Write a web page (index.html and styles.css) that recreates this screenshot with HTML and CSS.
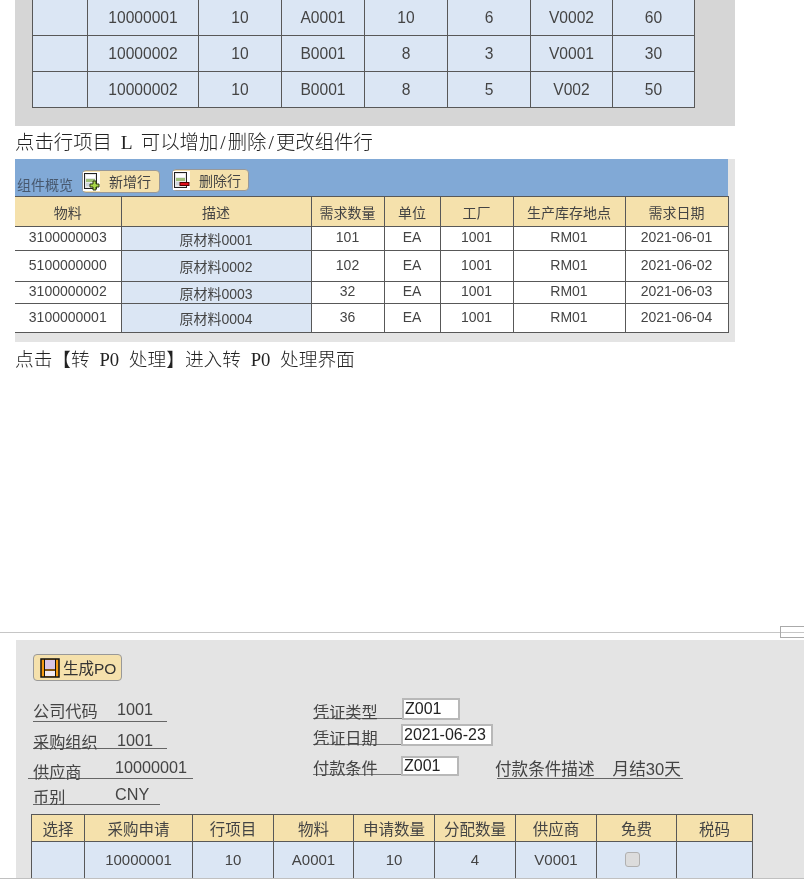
FILE: index.html
```html
<!DOCTYPE html>
<html lang="en">

<head>
    <meta charset="UTF-8">
    <title>Document</title>
    <link rel="stylesheet" href="styles.css">
</head>

<body>
    <!-- allocation table, top is scrolled off -->
    <section class="panel-top">
        <table class="grid grid-top">
            <colgroup>
                <col class="t1"><col class="t2"><col class="t3"><col class="t4">
                <col class="t5"><col class="t6"><col class="t7"><col class="t8">
            </colgroup>
            <tr><td></td><td>10000001</td><td>10</td><td>A0001</td><td>10</td><td>6</td><td>V0002</td><td>60</td></tr>
            <tr><td></td><td>10000002</td><td>10</td><td>B0001</td><td>8</td><td>3</td><td>V0001</td><td>30</td></tr>
            <tr><td></td><td>10000002</td><td>10</td><td>B0001</td><td>8</td><td>5</td><td>V002</td><td>50</td></tr>
        </table>
    </section>

    <p class="note note-first">点击行项目 L 可以增加<span class="slash">/</span>删除<span class="slash">/</span>更改组件行</p>

    <section class="panel-comp">
        <div class="comp-bar">
            <span class="comp-title">组件概览</span>
            <button class="btn btn-add">
                <svg class="btn-icon" width="17" height="19" viewBox="0 0 17 19">
                    <rect x="1.5" y="1.5" width="12" height="15" fill="#e8e8e8" stroke="#222"/>
                    <rect x="3" y="3" width="9" height="3" fill="#fff"/>
                    <rect x="3" y="7" width="9" height="3" fill="#9fc07a"/>
                    <rect x="3" y="11" width="9" height="3" fill="#cfd6dc"/>
                    <path d="M10 9h3v3h3v3h-3v3h-3v-3H7v-3h3z" fill="#a8d848" stroke="#2c3a10"/>
                </svg>
                <span class="btn-text">新增行</span>
            </button>
            <button class="btn btn-del">
                <svg class="btn-icon" width="17" height="19" viewBox="0 0 17 19">
                    <rect x="1.5" y="1.5" width="12" height="15" fill="#e8e8e8" stroke="#222"/>
                    <rect x="3" y="3" width="9" height="3" fill="#fff"/>
                    <rect x="3" y="7" width="9" height="3" fill="#9fc07a"/>
                    <rect x="3" y="11" width="5" height="3" fill="#cfd6dc"/>
                    <rect x="7" y="11.5" width="9" height="3" fill="#e0101c" stroke="#500"/>
                </svg>
                <span class="btn-text">删除行</span>
            </button>
        </div>
        <table class="grid grid-comp">
            <colgroup>
                <col class="c1"><col class="c2"><col class="c3"><col class="c4">
                <col class="c5"><col class="c6"><col class="c7">
            </colgroup>
            <tr class="head row-h"><th>物料</th><th>描述</th><th>需求数量</th><th>单位</th><th>工厂</th><th>生产库存地点</th><th>需求日期</th></tr>
            <tr class="row-a"><td>3100000003</td><td class="desc">原材料0001</td><td>101</td><td>EA</td><td>1001</td><td>RM01</td><td>2021-06-01</td></tr>
            <tr class="row-b"><td>5100000000</td><td class="desc">原材料0002</td><td>102</td><td>EA</td><td>1001</td><td>RM01</td><td>2021-06-02</td></tr>
            <tr class="row-c"><td>3100000002</td><td class="desc">原材料0003</td><td>32</td><td>EA</td><td>1001</td><td>RM01</td><td>2021-06-03</td></tr>
            <tr class="row-d"><td>3100000001</td><td class="desc">原材料0004</td><td>36</td><td>EA</td><td>1001</td><td>RM01</td><td>2021-06-04</td></tr>
        </table>
    </section>

    <p class="note note-second">点击【转 P0 处理】进入转 P0 处理界面</p>

    <div class="divider"><span class="divider-handle"></span></div>

    <section class="panel-po">
        <button class="btn btn-po">
            <svg class="btn-icon" width="20" height="20" viewBox="0 0 20 20">
                <rect x="1" y="1" width="18" height="18" fill="#f59a12" stroke="#111" stroke-width="1.5"/>
                <rect x="5" y="2" width="10" height="9" fill="#d9c6e6"/>
                <rect x="5" y="13" width="10" height="5" fill="#f0eaf4"/>
                <path d="M4.5 1v18M15.5 1v18M4.5 12h11" fill="none" stroke="#111"/>
            </svg>
            <span class="btn-text">生成PO</span>
        </button>

        <div class="po-form">
            <div class="po-left">
                <div class="field f1"><span class="flabel">公司代码</span><span class="fvalue">1001</span></div>
                <div class="field f2"><span class="flabel">采购组织</span><span class="fvalue">1001</span></div>
                <div class="field f3"><span class="flabel">供应商</span><span class="fvalue">10000001</span></div>
                <div class="field f4"><span class="flabel">币别</span><span class="fvalue">CNY</span></div>
            </div>
            <div class="po-right">
                <div class="inrow r1"><span class="inlabel">凭证类型</span><input class="in in-short" value="Z001"></div>
                <div class="inrow r2"><span class="inlabel inlabel-tight">凭证日期</span><input class="in in-date" value="2021-06-23"></div>
                <div class="inrow r3">
                    <span class="inlabel inlabel-tight">付款条件</span><input class="in in-short" value="Z001">
                    <div class="term"><span class="term-label">付款条件描述</span><span class="term-value">月结30天</span></div>
                </div>
            </div>
        </div>

        <table class="grid grid-po">
            <colgroup>
                <col class="p1"><col class="p2"><col class="p3"><col class="p4"><col class="p5">
                <col class="p6"><col class="p7"><col class="p8"><col class="p9">
            </colgroup>
            <tr class="head row-ph"><th>选择</th><th>采购申请</th><th>行项目</th><th>物料</th><th>申请数量</th><th>分配数量</th><th>供应商</th><th>免费</th><th>税码</th></tr>
            <tr class="row-pd"><td></td><td>10000001</td><td>10</td><td>A0001</td><td>10</td><td>4</td><td>V0001</td><td><input type="checkbox" class="check" disabled></td><td></td></tr>
        </table>
    </section>
    <div class="page-end"></div>
</body>

</html>
```

FILE: styles.css
```css
html,
body {
    margin: 0;
    height: 880px;
    overflow: hidden;
    background: #fff;
}

body {
    font-family: "Liberation Sans", "Noto Sans CJK SC", sans-serif;
    color: #444;
}

/* the shots are slightly soft */
section,
.note {
    filter: blur(0.5px);
}

/* tables */
.grid {
    table-layout: fixed;
    border-collapse: collapse;
    background: #dbe6f4;
}

.grid td,
.grid th {
    border: 1px solid #585858;
    padding: 0;
    text-align: center;
    font-weight: normal;
    overflow: hidden;
    white-space: nowrap;
}

.grid .head th {
    background: #f5e1ac;
}

/* top panel */
.panel-top {
    margin-left: 15px;
    width: 720px;
    height: 126px;
    background: #d6d6d6;
    padding-left: 17px;
    box-sizing: border-box;
    overflow: hidden;
}

.grid-top {
    width: 662px;
    font-size: 15.6px;
    margin-top: -1px;
}

.grid-top tr {
    height: 36px;
}

.t1 { width: 55px; }
.t2 { width: 111px; }
.t3 { width: 83px; }
.t4 { width: 83px; }
.t5 { width: 83px; }
.t6 { width: 83px; }
.t7 { width: 82px; }
.t8 { width: 82px; }

/* notes */
.note {
    margin: 0 0 0 15px;
    height: 33px;
    line-height: 33px;
    font-family: "Liberation Serif", "Noto Sans CJK SC", serif;
    font-weight: 300;
    word-spacing: 4px;
    color: #222;
}

.note-first {
    font-size: 19.4px;
}

.note-second {
    font-size: 18.7px;
    line-height: 36px;
    word-spacing: 5px;
}

.slash {
    margin: 0 2px;
}

/* component panel */
.panel-comp {
    margin-left: 15px;
    width: 720px;
    height: 183px;
    background: #e4e4e4;
}

.comp-bar {
    display: flex;
    align-items: flex-start;
    width: 713px;
    height: 37px;
    background: #81a9d6;
    box-sizing: border-box;
    padding-left: 2px;
}

.comp-title {
    margin-top: 17px;
    font-size: 14px;
    line-height: 18px;
    color: #47586e;
}

.btn {
    display: flex;
    align-items: center;
    padding: 0;
    box-sizing: border-box;
    border: 1px solid #999;
    border-radius: 4px;
    background: #f5e1ac;
    font-family: inherit;
    font-size: 14px;
    color: #444;
}

.btn-add {
    width: 78px;
    height: 23px;
    margin: 11px 0 0 9px;
}

.btn-del {
    width: 77px;
    height: 22px;
    margin: 10px 0 0 12px;
}

.btn-add .btn-icon,
.btn-del .btn-icon {
    background: #fff;
    flex-shrink: 0;
}

.btn-text {
    margin-left: 9px;
}

.btn-add .btn-text {
    margin-bottom: 2px;
}

.grid-comp {
    width: 713px;
    font-size: 14px;
    background: #fff;
}

.grid-comp td {
    line-height: 16px;
    padding-bottom: 3px;
}

.grid-comp td:first-child,
.grid-comp th:first-child {
    border-left: 0;
}

.grid-comp .desc {
    background: #dbe6f4;
    padding: 2px 0 0;
}

.c1 { width: 106px; }
.c2 { width: 190px; }
.c3 { width: 73px; }
.c4 { width: 56px; }
.c5 { width: 73px; }
.c6 { width: 112px; }
.c7 { width: 103px; }

.row-h { height: 30px; }
.row-a { height: 24px; }
.row-b { height: 31px; }
.row-c { height: 22px; }
.row-d { height: 29px; }

/* divider between the two shots */
.divider {
    position: relative;
    margin-top: 257px;
    height: 1px;
    background: #c6c6c6;
}

.divider-handle {
    position: absolute;
    left: 780px;
    top: -6px;
    width: 24px;
    height: 10px;
    border: 1px solid #aaa;
}

/* PO panel */
.panel-po {
    margin: 7px 0 0 16px;
    height: 238px;
    background: #e4e4e4;
    padding-top: 14px;
    box-sizing: border-box;
    overflow: hidden;
}

.btn-po {
    width: 89px;
    height: 27px;
    margin-left: 17px;
    font-size: 15.5px;
    color: #333;
}

.btn-po .btn-icon {
    margin-left: 6px;
}

.btn-po .btn-text {
    margin: 0 0 1px 3px;
}

.po-form {
    display: flex;
    margin-top: 20px;
    font-size: 16.2px;
}

.po-left {
    width: 285px;
    margin-left: 12px;
    flex-shrink: 0;
}

.field {
    display: flex;
    align-items: flex-end;
    height: 20px;
    border-bottom: 1px solid #666;
    line-height: 14px;
}

.flabel {
    width: 84px;
    flex-shrink: 0;
}

.fvalue {
    white-space: nowrap;
}

.f1 { width: 134px; margin-left: 5px; }
.f1 .flabel { margin-bottom: 3px; }
.f1 .fvalue { margin-bottom: 5px; }

.f2 { width: 134px; margin: 6px 0 0 5px; }
.f2 .flabel { margin-bottom: -1px; }
.f2 .fvalue { margin-bottom: 1px; }

.f3 { width: 165px; margin-top: 9px; }
.f3 .flabel { margin: 0 0 -1px 5px; width: 82px; }
.f3 .fvalue { margin-bottom: 4px; }

.f4 { width: 127px; margin: 5px 0 0 5px; }
.f4 .flabel { margin-bottom: 0; width: 82px; }
.f4 .fvalue { margin-bottom: 3px; }

.po-right {
    margin-top: -3px;
}

.inrow {
    display: flex;
    align-items: flex-end;
}

.r1 { height: 22px; }
.r2 { height: 22px; margin-top: 4px; }
.r3 { height: 20px; margin-top: 10px; }

.inlabel {
    width: 89px;
    margin-bottom: 1px;
    line-height: 12px;
    border-bottom: 1px solid #777;
}

.inlabel-tight {
    width: 88px;
}

.in {
    box-sizing: border-box;
    height: 100%;
    margin: 0;
    padding: 0 0 0 1px;
    border: 2px solid #b8b8b8;
    background: #fff;
    font-family: inherit;
    font-size: 16px;
    color: #222;
}

.in-short { width: 58px; }
.in-date { width: 92px; }

.term {
    display: flex;
    width: 186px;
    margin: 0 0 -3px 38px;
    border-bottom: 1px solid #666;
    font-size: 16.6px;
    line-height: 17px;
    white-space: nowrap;
}

.term-label {
    margin-left: -2px;
}

.term-value {
    margin-left: 18px;
}

.grid-po {
    width: 721px;
    margin: 9px 0 0 15px;
    font-size: 15.5px;
}

.grid-po td {
    font-size: 15px;
    padding-bottom: 1px;
}

.p1 { width: 53px; }
.p2 { width: 108px; }
.p3 { width: 81px; }
.p4 { width: 80px; }
.p5 { width: 81px; }
.p6 { width: 81px; }
.p7 { width: 81px; }
.p8 { width: 80px; }
.p9 { width: 76px; }

.row-ph { height: 27px; }
.row-pd { height: 37px; }

.check {
    appearance: none;
    display: block;
    width: 15px;
    height: 15px;
    margin: 0 0 1px 28px;
    border: 1px solid #b0b0b0;
    border-radius: 3px;
    background: #dcdcdc;
}

.page-end {
    height: 1px;
    background: #c0c0c0;
}
```
